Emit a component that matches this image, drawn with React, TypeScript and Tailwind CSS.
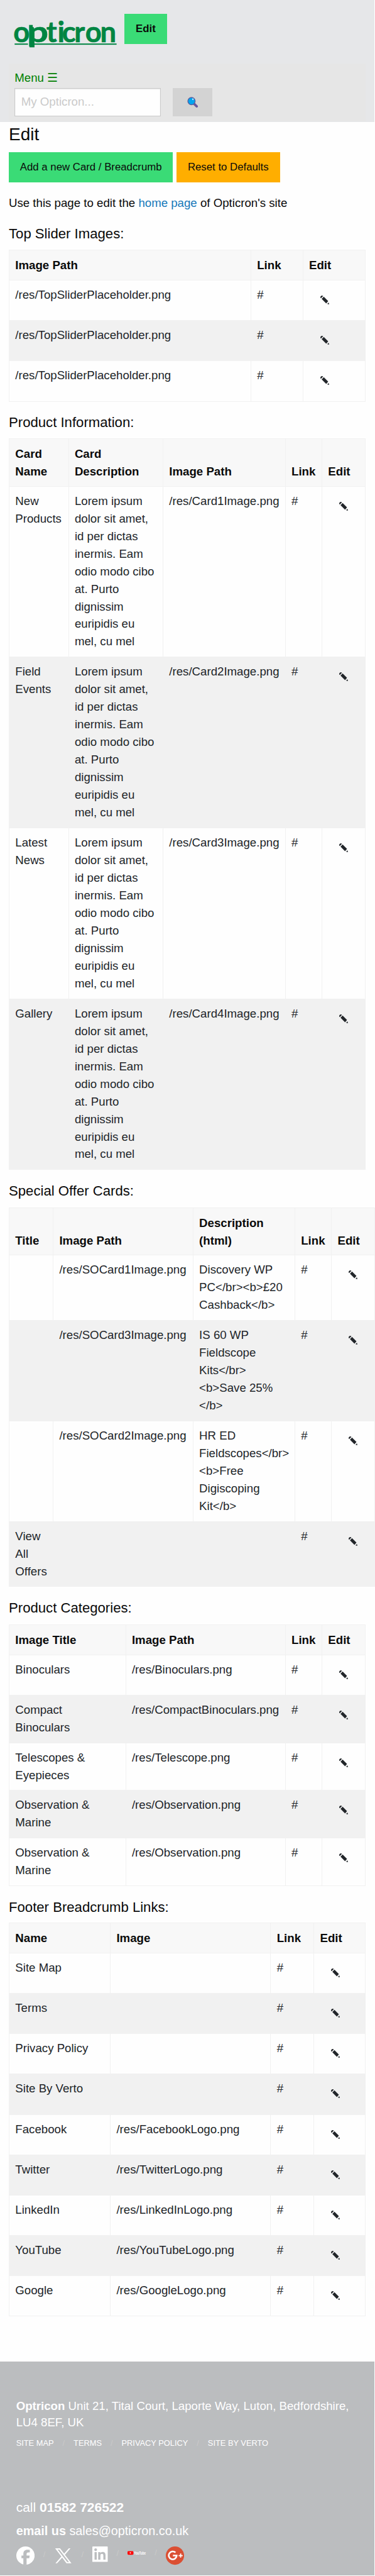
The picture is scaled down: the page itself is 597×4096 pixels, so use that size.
import React from "react";

type Row = { cells: string[]; height: string };

type TableProps = {
  title: string;
  titleGap: string;
  headers: string[];
  headHeight: string;
  columns: string[];
  width: string;
  rows: Row[];
};

const LOREM =
  "Lorem ipsum dolor sit amet, id per dictas inermis. Eam odio modo cibo at. Purto dignissim euripidis eu mel, cu mel";

const H110 = "h-[64.13px]";
const H130 = "h-[75.79px]";
const H178 = "h-[103.78px]";
const H274 = "h-[159.75px]";
const H466 = "h-[271.68px]";

function Pencil() {
  return (
    <svg className="block h-[14px] w-[14px]" viewBox="0 0 24 24" fill="#212529">
      <path d="M0 4.6A4.6 4.6 0 0 1 7.6 1.2L1.6 7.4A4.4 4.4 0 0 1 0 4.6Z" />
      <path d="M9.3 3.2L21.4 15.2L16 21.6L3.6 9.2Z" />
      <path d="M22.6 18.8L24 24L18.8 22.8Z" />
    </svg>
  );
}

function DataTable({ title, titleGap, headers, headHeight, columns, width, rows }: TableProps) {
  return (
    <section>
      <h5 className={`text-[22.15px] leading-[31px] ${titleGap}`}>{title}</h5>
      <table
        className={`table-fixed border-separate border-spacing-0 border-t border-l border-[#f1f1f1] ${width}`}
      >
        <colgroup>
          {columns.map((c, i) => (
            <col key={i} className={c} />
          ))}
        </colgroup>
        <thead>
          <tr className={`bg-[#f8f8f8] ${headHeight}`}>
            {headers.map((h) => (
              <th
                key={h}
                className="border-r border-b border-[#f1f1f1] px-[9.3px] pt-0 pb-[8.8px] text-left align-bottom font-bold"
              >
                {h}
              </th>
            ))}
          </tr>
        </thead>
        <tbody className="text-[#212529]">
          {rows.map((r, i) => (
            <tr key={i} className={`even:bg-[#f1f1f1] ${r.height}`}>
              {r.cells.map((c, j) => (
                <td
                  key={j}
                  className="border-r border-b border-[#f1f1f1] pt-[9px] pr-[6px] pb-0 pl-[9.3px] align-top whitespace-pre-line"
                >
                  {c}
                </td>
              ))}
              <td className="border-r border-b border-[#f1f1f1] pt-[24px] pb-0 pl-[27.2px] align-top">
                <Pencil />
              </td>
            </tr>
          ))}
        </tbody>
      </table>
    </section>
  );
}

function Logo() {
  return (
    <svg className="mt-[12.8px] h-[40px] w-[163.2px] overflow-visible" viewBox="40 60 280 68.6" fill="#008542">
      <g
        fontSize="78"
        fontWeight="700"
        fontFamily="Lato, sans-serif"
        stroke="#008542"
        strokeWidth="1"
      >
        <text x="37" y="115.2">o</text>
        <text x="75.5" y="115.2" textLength="57" lengthAdjust="spacingAndGlyphs">
          p
        </text>
        <text x="127 157.5 170 203.5 233.5 274" y="115.2">ticron</text>
      </g>
      <rect x="80" y="68" width="10" height="58.5" />
      <rect x="40.5" y="118.6" width="36.5" height="3.4" />
      <rect x="93" y="118.6" width="226" height="3.4" />
    </svg>
  );
}

function Slash({ className }: { className: string }) {
  return <span className={`w-[3.56px] text-[12.83px] leading-[20.5px] text-[#cacaca] ${className}`}>/</span>;
}

function Header() {
  return (
    <header className="h-[193.5px] w-[595.8px] bg-[#e6e7e9]">
      <div className="flex h-[101.4px] items-start pt-[22.2px] pl-[23.3px]">
        <Logo />
        <button className="ml-[11.7px] h-[47.8px] w-[67.6px] bg-[#3adb76] text-[16.79px] leading-none font-bold">
          Edit
        </button>
      </div>
      <div className="mx-[14px] h-[92.1px] bg-[#e6e6e6] pt-[9px] pl-[9.3px]">
        <div className="flex h-[28px] items-center text-[#008000]">
          Menu&nbsp;<span>☰</span>
        </div>
        <div className="mt-px flex gap-[18.7px] pt-[0.3px]">
          <input
            placeholder="My Opticron..."
            className="h-[45.6px] w-[233.2px] border border-[#cacaca] bg-[#fefefe] px-[9.5px] shadow-[inset_0_1px_2px_rgba(10,10,10,0.1)] placeholder:text-[#cacaca]"
          />
          <button className="flex h-[45.6px] w-[63.3px] items-center justify-center bg-[#d3d3d3]">
            <svg className="h-[17.5px] w-[17.5px]" viewBox="0 0 30 30">
              <path d="M19 19L26 26" stroke="#6659a0" strokeWidth="6.4" strokeLinecap="round" />
              <circle cx="11.8" cy="11.6" r="10" fill="#00a4ef" stroke="#5d5a9b" strokeWidth="2.2" />
              <ellipse cx="15.6" cy="6.6" rx="1.5" ry="2.2" fill="#fff" />
            </svg>
          </button>
        </div>
      </div>
    </header>
  );
}

function Footer() {
  return (
    <footer className="mt-[72.3px] h-[339.1px] w-[595.8px] bg-[#bbbdbf] pt-[57.1px] pl-[25.65px] text-white">
      <p className="w-[540px] leading-[26.7px]">
        <b>Optricon</b> Unit 21, Tital Court, Laporte Way, Luton, Bedfordshire,
        <br />
        LU4 8EF, UK
      </p>
      <nav className="mt-[8.8px] flex h-[20.5px] gap-[14px] text-[12.83px] leading-[20.5px] whitespace-nowrap">
        <span>SITE MAP</span>
        <Slash className="" />
        <span>TERMS</span>
        <Slash className="" />
        <span>PRIVACY POLICY</span>
        <Slash className="" />
        <span>SITE BY VERTO</span>
      </nav>
      <p className="mt-[77.1px] text-[20.99px] leading-[29.4px]">
        call <b>01582 726522</b>
      </p>
      <p className="mt-[8.9px] text-[19.82px] leading-[27.75px]">
        <b>email us</b> sales@opticron.co.uk
      </p>
      <div className="mt-[11px] flex items-start gap-[14px]">
        <svg className="h-[29.15px] w-[29.15px]" viewBox="0 0 50 50">
          <circle cx="25" cy="25" r="25" fill="#fff" />
          <path
            d="M19.2 50V32H14V25H19.2V21C19.2 12.5 23 9 30.5 9C33 9 35 9.2 36.8 9.6V16.2H33C29.3 16.2 28 17.8 28 21V25H36.5L35.2 32H28V50Z"
            fill="#bbbdbf"
          />
        </svg>
        <Slash className="mt-[2.8px]" />
        <svg className="h-[29.15px] w-[29.15px]" viewBox="0 0 50 50">
          <path
            d="M3 5H16.5L27.6 19.8L40.5 5H45L29.7 22.6L47.5 46H34L22.2 30.3L8.4 46H4L20.1 27.4ZM9.8 8.4L36 42.6H40.8L14.6 8.4Z"
            fill="#fff"
            fillRule="evenodd"
          />
        </svg>
        <Slash className="mt-[2.8px]" />
        <svg className="h-[24.5px] w-[24.5px]" viewBox="0 0 42 42">
          <rect width="42" height="42" rx="1.5" fill="#fff" />
          <g fill="#bbbdbf">
            <circle cx="9" cy="9" r="3.7" />
            <rect x="6" y="15.5" width="6" height="20.5" />
            <path d="M16 15.5H21.7V18.3C23 16.2 25 15 28 15C34 15 36 18.6 36 24.5V36H30V25.5C30 22.4 29.4 20.2 26.3 20.2C23.2 20.2 22 22.4 22 25.5V36H16Z" />
          </g>
        </svg>
        <Slash className="mt-[0.2px]" />
        <svg className="mt-[6.6px] h-[6.6px] w-[29.15px] overflow-visible" viewBox="0 0 50 11.3">
          <rect y="0.7" width="16" height="10" rx="2.4" fill="#f00" />
          <path d="M6.3 3.6L10.6 5.7L6.3 7.8Z" fill="#fff" />
          <text
            x="17.6"
            y="9.8"
            fontSize="11.5"
            fontWeight="700"
            fontFamily="Liberation Sans, sans-serif"
            fill="#fff"
            textLength="32.4"
            lengthAdjust="spacingAndGlyphs"
          >
            YouTube
          </text>
        </svg>
        <Slash className="mt-[-0.7px]" />
        <svg className="h-[29.15px] w-[29.15px]" viewBox="0 0 50 50">
          <circle cx="25" cy="25" r="25" fill="#db4f33" />
          <path
            d="M26.3 16.6A10.8 10.8 0 1 0 29.6 25H19.4"
            fill="none"
            stroke="#fff"
            strokeWidth="4.4"
          />
          <path d="M35 25H46M40.5 19.5V30.5" stroke="#fff" strokeWidth="3.2" />
        </svg>
      </div>
    </footer>
  );
}

export default function App() {
  return (
    <div className="w-[597px] overflow-hidden bg-[#fefefe] font-['Liberation_Sans',Arial,sans-serif] text-[18.66px] leading-[27.98px] text-[#0a0a0a]">
      <Header />
      <main className="pl-[14px]">
        <h3 className="text-[27.98px] leading-[39.2px]">Edit</h3>
        <div className="mt-[9.7px] flex gap-[5.6px] text-[16.79px]">
          <button className="h-[47.8px] w-[261.4px] bg-[#3adb76] leading-none">Add a new Card / Breadcrumb</button>
          <button className="h-[47.8px] w-[164.6px] bg-[#ffae00] leading-none">Reset to Defaults</button>
        </div>
        <p className="mt-[18.9px] mb-[18.5px]">
          Use this page to edit the <a className="text-[#1779ba]">home page</a> of Opticron's site
        </p>
        <div className="flex flex-col gap-[17.6px]">
          <DataTable
            title="Top Slider Images:"
            titleGap="mb-[10.8px]"
            headers={["Image Path", "Link", "Edit"]}
            headHeight="h-[47.81px]"
            columns={["w-[384.9px]", "w-[82.8px]", "w-[99.1px]"]}
            width="w-[567.8px]"
            rows={[
              { cells: ["/res/TopSliderPlaceholder.png", "#"], height: H110 },
              { cells: ["/res/TopSliderPlaceholder.png", "#"], height: H110 },
              { cells: ["/res/TopSliderPlaceholder.png", "#"], height: H110 },
            ]}
          />
          <DataTable
            title="Product Information:"
            titleGap="mb-[9.7px]"
            headers={["Card Name", "Card Description", "Image Path", "Link", "Edit"]}
            headHeight={H130}
            columns={["w-[94.6px]", "w-[150.4px]", "w-[194.75px]", "w-[58.3px]", "w-[68.8px]"]}
            width="w-[567.8px]"
            rows={[
              { cells: ["New Products", LOREM, "/res/Card1Image.png", "#"], height: H466 },
              { cells: ["Field Events", LOREM, "/res/Card2Image.png", "#"], height: H466 },
              { cells: ["Latest News", LOREM, "/res/Card3Image.png", "#"], height: H466 },
              { cells: ["Gallery", LOREM, "/res/Card4Image.png", "#"], height: H466 },
            ]}
          />
          <DataTable
            title="Special Offer Cards:"
            titleGap="mb-[10.8px]"
            headers={["Title", "Image Path", "Description (html)", "Link", "Edit"]}
            headHeight={H130}
            columns={["w-[70.1px]", "w-[222.7px]", "w-[162.1px]", "w-[58.3px]", "w-[68.8px]"]}
            width="w-[583px]"
            rows={[
              { cells: ["", "/res/SOCard1Image.png", "Discovery WP PC</br><b>£20 Cashback</b>", "#"], height: H178 },
              { cells: ["", "/res/SOCard3Image.png", "IS 60 WP Fieldscope Kits</br> <b>Save 25% </b>", "#"], height: H274 },
              { cells: ["", "/res/SOCard2Image.png", "HR ED Fieldscopes</br> <b>Free Digiscoping Kit</b>", "#"], height: H274 },
              { cells: ["View All Offers", "", "", "#"], height: H178 },
            ]}
          />
          <DataTable
            title="Product Categories:"
            titleGap="mb-[10.8px]"
            headers={["Image Title", "Image Path", "Link", "Edit"]}
            headHeight="h-[47.81px]"
            columns={["w-[185.6px]", "w-[254.15px]", "w-[58.3px]", "w-[68.8px]"]}
            width="w-[567.8px]"
            rows={[
              { cells: ["Binoculars", "/res/Binoculars.png", "#"], height: H110 },
              { cells: ["Compact\nBinoculars", "/res/CompactBinoculars.png", "#"], height: H130 },
              { cells: ["Telescopes & Eyepieces", "/res/Telescope.png", "#"], height: H130 },
              { cells: ["Observation & Marine", "/res/Observation.png", "#"], height: H130 },
              { cells: ["Observation & Marine", "/res/Observation.png", "#"], height: H130 },
            ]}
          />
          <DataTable
            title="Footer Breadcrumb Links:"
            titleGap="mb-[9.7px]"
            headers={["Name", "Image", "Link", "Edit"]}
            headHeight="h-[47.81px]"
            columns={["w-[161.1px]", "w-[255.3px]", "w-[68.8px]", "w-[81.6px]"]}
            width="w-[567.8px]"
            rows={[
              { cells: ["Site Map", "", "#"], height: H110 },
              { cells: ["Terms", "", "#"], height: H110 },
              { cells: ["Privacy Policy", "", "#"], height: H110 },
              { cells: ["Site By Verto", "", "#"], height: H110 },
              { cells: ["Facebook", "/res/FacebookLogo.png", "#"], height: H110 },
              { cells: ["Twitter", "/res/TwitterLogo.png", "#"], height: H110 },
              { cells: ["LinkedIn", "/res/LinkedInLogo.png", "#"], height: H110 },
              { cells: ["YouTube", "/res/YouTubeLogo.png", "#"], height: H110 },
              { cells: ["Google", "/res/GoogleLogo.png", "#"], height: H110 },
            ]}
          />
        </div>
      </main>
      <Footer />
    </div>
  );
}
